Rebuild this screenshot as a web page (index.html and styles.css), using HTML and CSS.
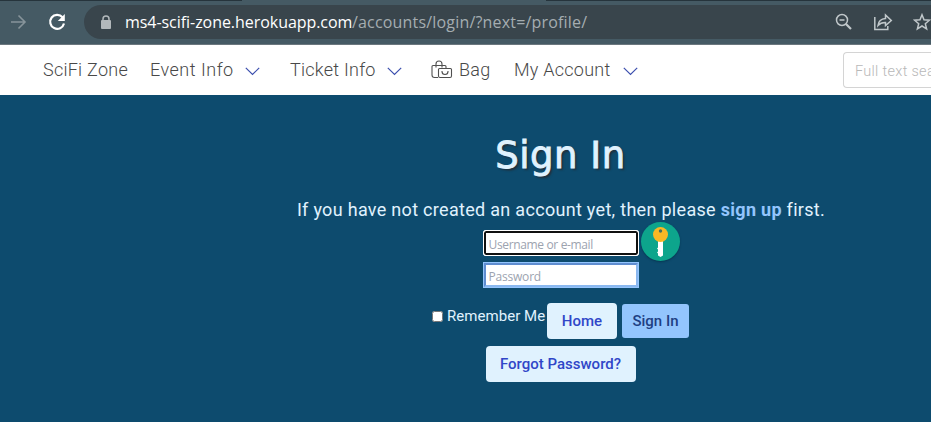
FILE: index.html
```html
<!DOCTYPE html>
<html lang="en">
<head>
<meta charset="utf-8">
<title>Sign In</title>
<link rel="stylesheet" href="styles.css">
</head>
<body>
<header class="toolbar">
  <svg class="forward" width="18" height="18" viewBox="0 0 18 18"><path d="M1 9h14M8.500 2.500L15 9l-6.500 6.500"/></svg>
  <svg class="reload" width="18" height="18" viewBox="0 0 18 18"><path class="arc" d="M14.500 4.200A7 7 0 1 0 16 10.500"/><path class="head" d="M16.800 1v7h-7z"/></svg>
  <div class="address">
    <svg class="lock" width="12" height="14" viewBox="0 0 12 14"><path class="shackle" d="M3 6V4a3 3 0 0 1 6 0v2"/><rect x="1" y="5" width="10" height="9" rx="1"/></svg>
    <span class="host">ms4-scifi-zone.herokuapp.com</span><span class="path">/accounts/login/?next=/profile/</span>
    <div class="actions">
      <svg width="18" height="18" viewBox="0 0 18 18"><circle cx="7" cy="7" r="5.500"/><path d="M4.500 7h5"/><path class="thick" d="M11 11l5 5"/></svg>
      <svg width="20" height="18" viewBox="0 0 20 18"><path d="M1.800 4v12.500h13V13M5 12.500C5.500 8 8 5.800 12.500 5.500V2l5.800 5.500-5.800 5V9.500C9 9.400 7 10.200 5 12.500z"/></svg>
      <svg width="18" height="18" viewBox="0 0 18 18"><path d="M9 1.800l2 5 5.400.4-4.100 3.500 1.300 5.200L9 13l-4.600 2.900 1.300-5.200-4.100-3.500 5.400-.4z"/></svg>
    </div>
  </div>
</header>
<nav class="nav">
  <a class="item brand">SciFi Zone</a>
  <a class="item event"><span>Event Info</span><svg class="chevron" width="15" height="9" viewBox="0 0 15 9"><path d="M.8.8L7.500 7.500 14.200.8"/></svg></a>
  <a class="item ticket"><span>Ticket Info</span><svg class="chevron" width="15" height="9" viewBox="0 0 15 9"><path d="M.8.8L7.500 7.500 14.200.8"/></svg></a>
  <a class="item bag"><svg class="bag-icon" width="22" height="19" viewBox="0 0 22 19"><path d="M7 17.500H3.500Q1 17.500 1 15V6.500Q1 5.500 2 5.500h12q1 0 1 1V8M5 7.500V4a3 3 0 0 1 6 0v3.500M8.500 8.500h11q1 0 1 1V16q0 1.500-1.500 1.500H9q-1.500 0-1.500-1.500V9.500q0-1 1-1zM11 11v.5a3 3 0 0 0 6 0V11"/></svg><span>Bag</span></a>
  <a class="item account"><span>My Account</span><svg class="chevron" width="15" height="9" viewBox="0 0 15 9"><path d="M.8.8L7.500 7.500 14.200.8"/></svg></a>
  <input class="search" type="text" placeholder="Full text search">
</nav>
<main class="main">
  <h1 class="title">Sign In</h1>
  <p class="intro">If you have not created an account yet, then please <a class="signup">sign up</a> first.</p>
  <form class="form">
    <div class="field">
      <input class="input focused" type="text" placeholder="Username or e-mail">
      <span class="key"><svg width="39" height="39" viewBox="0 0 39 39"><path class="blade" d="M17 19h5v14.500L19.500 35 17 33.500v-2l-1-1 1-1v-2l-1-1 1-1z"/><circle class="bow" cx="19.500" cy="12.500" r="7.500"/><circle class="hole" cx="19.500" cy="9" r="1.700"/></svg></span>
    </div>
    <input class="input password" type="text" placeholder="Password">
    <div class="row">
      <label class="remember"><input class="check" type="checkbox"><span>Remember Me</span></label>
      <a class="button home">Home</a>
      <button class="button submit" type="button">Sign In</button>
    </div>
    <a class="button forgot">Forgot Password?</a>
  </form>
</main>
</body>
</html>
```
FILE: styles.css
```css
* { box-sizing: border-box; }
body { margin: 0; width: 931px; height: 422px; overflow: hidden; background: #0d4b6e; font-family: Roboto, "Liberation Sans", sans-serif; }
svg { display: block; flex: none; fill: none; }

.toolbar { display: flex; align-items: center; height: 45px; padding-left: 10px; background: linear-gradient(to right, #26343c 242px, #455a64 242px 546px, #26343c 546px) top / 100% 1px no-repeat, #455a64; border-bottom: 1px solid #6b777e; }
.forward { stroke: #87949a; stroke-width: 1.6; }
.reload { margin-left: 20px; }
.reload .arc { stroke: #fff; stroke-width: 2.2; }
.reload .head { fill: #fff; }
.address { display: flex; align-items: center; flex: 1; height: 34px; margin-left: 18px; padding-left: 16px; border-radius: 17px 0 0 17px; background: #39454c; font-family: "Open Sans", "Noto Sans", sans-serif; font-size: 16px; white-space: nowrap; }
.lock { fill: #b2b8bb; }
.lock .shackle { fill: none; stroke: #b2b8bb; stroke-width: 1.5; }
.host { width: 227px; margin-left: 13px; color: #fff; letter-spacing: -.05px; }
.path { color: #a5adb1; letter-spacing: .18px; }
.actions { display: flex; gap: 20px; margin-left: auto; stroke: #c0c7ca; stroke-width: 1.5; }
.actions .thick { stroke-width: 2.2; }

.nav { display: flex; align-items: center; height: 50px; padding-left: 43px; background: #fff; color: #484848; font-size: 18px; font-weight: 300; white-space: nowrap; }
.item { display: flex; align-items: center; flex: none; margin-top: -2px; letter-spacing: .25px; }
.brand { width: 107px; }
.event { width: 140px; letter-spacing: .5px; }
.ticket { width: 141px; }
.bag { width: 83px; }
.account { width: 124px; }
.event span { width: 95px; }
.ticket span { width: 97px; }
.account span { width: 109px; }
.chevron { margin-top: 5px; stroke: #3c4fae; stroke-width: 1.2; }
.bag-icon { margin-right: 6px; stroke: #505050; stroke-width: 1.1; }
.search { width: 88px; height: 36px; flex: none; margin-left: auto; padding: 2px 0 0 11px; border: 1px solid #d4d4d4; border-right: 0; border-radius: 4px 0 0 4px; font: 300 14.5px Roboto, sans-serif; letter-spacing: .3px; }
.search::placeholder { color: #b8b8b8; }

.main { display: flex; flex-direction: column; align-items: center; padding-left: 190px; color: #e0f2fe; }
.title { height: 46px; margin: 38px 0 0; font: 400 37px/46px "DejaVu Sans", sans-serif; letter-spacing: .5px; -webkit-text-stroke: .9px #e0f2fe; text-shadow: 2px 2px 2px #20303c; white-space: nowrap; }
.intro { height: 28px; margin: 17px 0 0 1px; font-size: 18px; line-height: 28px; letter-spacing: .3px; white-space: nowrap; }
.signup { color: #93c5fd; font-weight: 700; }
.form { display: flex; flex-direction: column; align-items: center; width: 100%; }
.field { position: relative; margin-top: 7px; height: 24px; }
.input { display: block; width: 154px; height: 24px; padding: 2px 3px 0; border: 2px solid #8ab8f0; border-top-color: #5f8dd0; border-left-color: #5f8dd0; outline: 1px solid #93c5fd; background: #fff; font: 12px "Open Sans", sans-serif; letter-spacing: -.2px; }
.input::placeholder { color: #9ca3af; }
.focused { border: 2px solid #101010; border-radius: 2px; outline: 1px solid #fff; box-shadow: 0 0 0 1px #fff; letter-spacing: -.35px; }
.key { position: absolute; left: 157px; top: -9px; width: 39px; height: 39px; border-radius: 50%; background: #0da58c; box-shadow: 0 1px 2px #073852; }
.blade { fill: #fff; }
.bow { fill: #f9b824; }
.hole { fill: #4b6e5c; }
.password { margin-top: 8px; }
.row { display: flex; width: 257px; margin-top: 16px; }
.remember { display: flex; align-items: center; width: 115px; height: 26px; font-size: 15px; font-weight: 400; white-space: nowrap; }
.remember span { letter-spacing: .05px; }
.check { width: 11px; height: 11px; margin: 0 4px 0 0; }
.button { display: flex; align-items: center; justify-content: center; border-radius: 4px; background: #e0f2fe; color: #3046c8; font: 500 15px Roboto, sans-serif; white-space: nowrap; }
.home { width: 70px; height: 36px; }
.submit { width: 67px; height: 34px; margin: 1px 0 0 5px; padding: 0; border: 0; border-radius: 3px; background: #93c5fd; color: #1e3f83; }
.forgot { width: 150px; height: 36px; margin-top: 7px; }
```
